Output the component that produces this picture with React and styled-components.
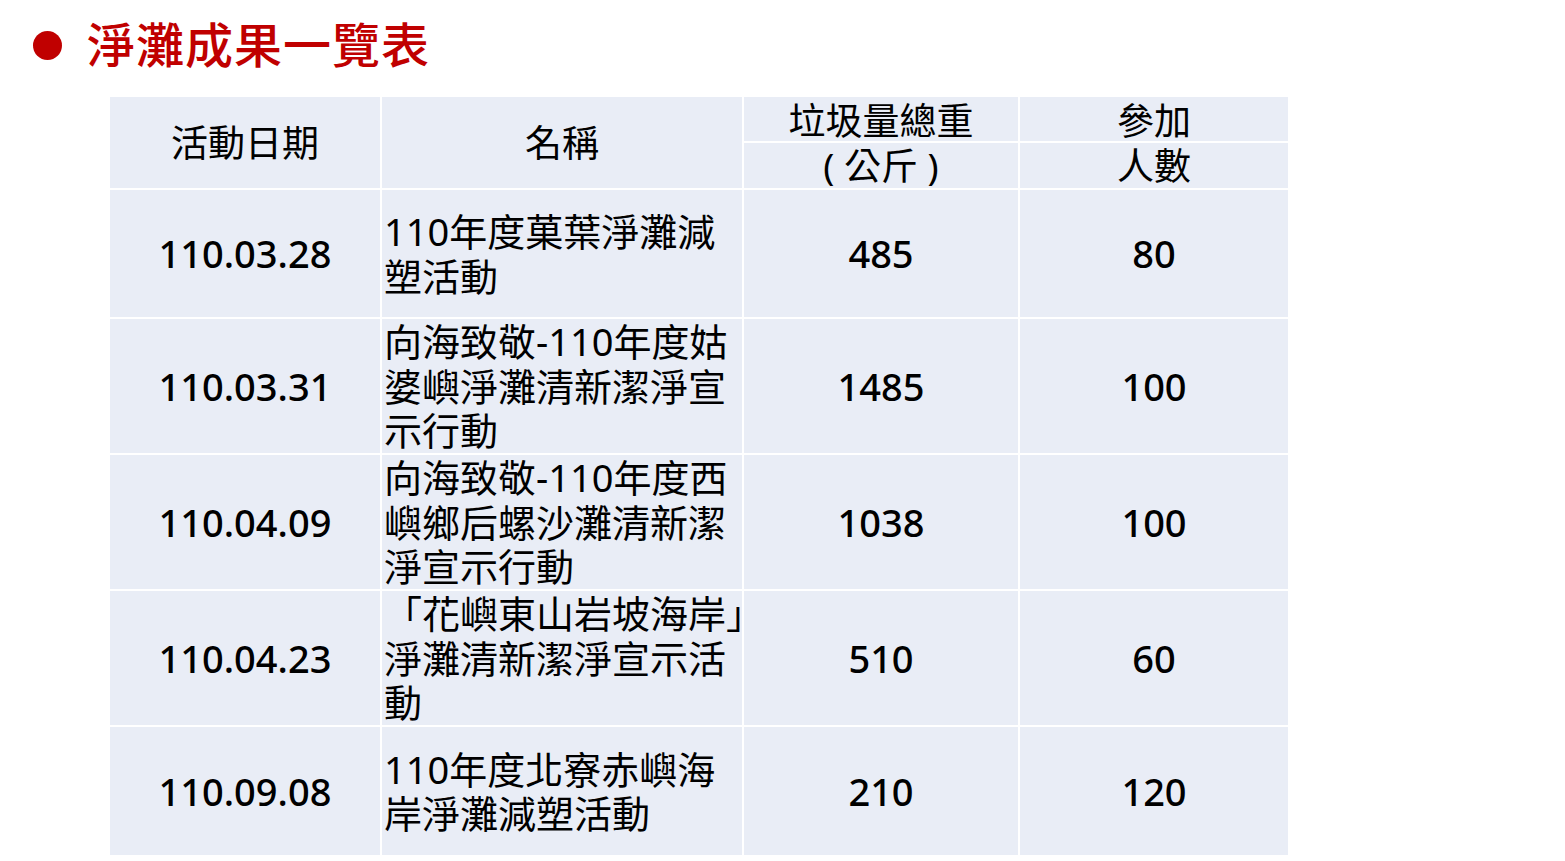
import React from 'react'
import styled, { createGlobalStyle } from 'styled-components'

const GlobalStyle = createGlobalStyle`
  html, body {
    margin: 0;
    padding: 0;
    background: #ffffff;
  }
  body {
    font-family: "Noto Sans", "Noto Sans CJK TC", sans-serif;
    color: #000000;
  }
`

const Page = styled.div`
  width: 1565px;
  height: 861px;
  overflow: hidden;
  background: #ffffff;
`

const TitleBar = styled.div`
  display: flex;
  align-items: center;
  height: 95px;
  padding-left: 33px;
  box-sizing: border-box;
  padding-bottom: 4px;
`

const Dot = styled.span`
  width: 29px;
  height: 29px;
  border-radius: 50%;
  background: #c00000;
  margin-right: 25px;
  flex: none;
`

const Title = styled.h1`
  margin: 0 0 8px;
  font-family: "Noto Sans CJK TC", sans-serif;
  font-size: 48px;
  font-weight: 500;
  color: #c00000;
  line-height: 1;
  letter-spacing: 1px;
`

const Table = styled.table`
  margin-left: 108px;
  width: 1182px;
  border-collapse: separate;
  border-spacing: 2px;
  table-layout: fixed;
`

const Col = styled.col`
  width: ${p => p.$w}px;
`

const Cell = styled.td`
  background: #e9edf6;
  padding: 0;
  font-size: 38px;
  line-height: 44.5px;
  font-weight: 500;
  text-align: ${p => (p.$left ? 'left' : 'center')};
  padding-left: ${p => (p.$left ? '2px' : '0')};
  vertical-align: middle;
  white-space: nowrap;
  overflow: visible;
  height: ${p => p.$h}px;
  box-sizing: border-box;
`

const HeadCell = styled(Cell).attrs({ as: 'th' })`
  font-weight: 400;
  font-size: 37px;
  line-height: ${p => (p.$top ? '40px' : '44px')};
  padding-top: ${p => (p.$top ? '4px' : '0')};
`

const NameLine = styled.div`
  font-weight: 400;
`

const rows = [
  { date: '110.03.28', name: ['110年度菓葉淨灘減', '塑活動'], kg: '485', people: '80', h: 127 },
  { date: '110.03.31', name: ['向海致敬-110年度姑', '婆嶼淨灘清新潔淨宣', '示行動'], kg: '1485', people: '100', h: 134 },
  { date: '110.04.09', name: ['向海致敬-110年度西', '嶼鄉后螺沙灘清新潔', '淨宣示行動'], kg: '1038', people: '100', h: 134 },
  { date: '110.04.23', name: ['「花嶼東山岩坡海岸」', '淨灘清新潔淨宣示活', '動'], kg: '510', people: '60', h: 134 },
  { date: '110.09.08', name: ['110年度北寮赤嶼海', '岸淨灘減塑活動'], kg: '210', people: '120', h: 128 },
]

export default function App() {
  return (
    <Page>
      <GlobalStyle />
      <TitleBar>
        <Dot />
        <Title>淨灘成果一覽表</Title>
      </TitleBar>
      <Table>
        <colgroup>
          <Col $w={270} />
          <Col $w={360} />
          <Col $w={274} />
          <Col $w={268} />
        </colgroup>
        <thead>
          <tr>
            <HeadCell rowSpan={2}>活動日期</HeadCell>
            <HeadCell rowSpan={2}>名稱</HeadCell>
            <HeadCell $h={44} $top>垃圾量總重</HeadCell>
            <HeadCell $h={44} $top>參加</HeadCell>
          </tr>
          <tr>
            <HeadCell $h={45}>( 公斤 )</HeadCell>
            <HeadCell $h={45}>人數</HeadCell>
          </tr>
        </thead>
        <tbody>
          {rows.map(r => (
            <tr key={r.date}>
              <Cell $h={r.h}>{r.date}</Cell>
              <Cell $h={r.h} $left>
                {r.name.map((line, i) => (
                  <NameLine key={i}>{line}</NameLine>
                ))}
              </Cell>
              <Cell $h={r.h}>{r.kg}</Cell>
              <Cell $h={r.h}>{r.people}</Cell>
            </tr>
          ))}
        </tbody>
      </Table>
    </Page>
  )
}
